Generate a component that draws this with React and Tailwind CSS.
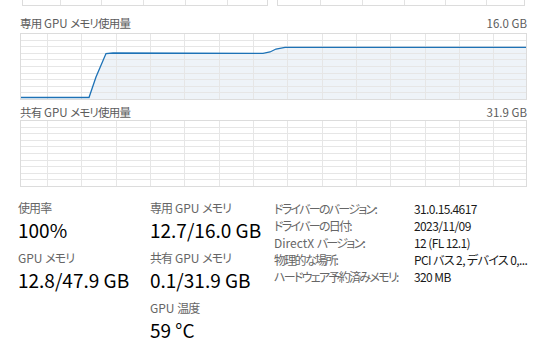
const MAIN_COLS = [27, 61.3, 95.7, 130, 164.3, 198.7, 233, 267.3, 301.7, 336, 370.3, 404.7, 439, 473.3];

function MiniGraph({ width, cols }) {
    return (
        <svg width={width} height={6} className="block">
            {cols.map((x) => (
                <line key={x} x1={x + 0.5} y1={0} x2={x + 0.5} y2={6} stroke="#e3e3e3" />
            ))}
            <line x1={0.5} y1={0} x2={0.5} y2={6} stroke="#dcdcdc" />
            <line x1={width - 0.5} y1={0} x2={width - 0.5} y2={6} stroke="#dcdcdc" />
            <line x1={0} y1={5.5} x2={width} y2={5.5} stroke="#dcdcdc" />
        </svg>
    );
}

function MemGraph({ fill, line }) {
    const w = 507;
    const h = 67;
    const rows = [1, 2, 3, 4, 5, 6, 7, 8, 9].map((k) => Math.round(k * 6.6) + 0.5);
    return (
        <svg width={w} height={h} className="block">
            {fill && <path d={fill} fill="#eef3f8" />}
            {rows.map((y) => (
                <line key={y} x1={0} y1={y} x2={w} y2={y} stroke="#e6e6e6" />
            ))}
            {MAIN_COLS.map((x) => (
                <line key={x} x1={Math.round(x) + 0.5} y1={0} x2={Math.round(x) + 0.5} y2={h} stroke="#e6e6e6" />
            ))}
            <rect x={0.5} y={0.5} width={w - 1} height={h - 1} fill="none" stroke="#dcdcdc" />
            {line && <path d={line} fill="none" stroke="#1d72b6" strokeWidth="1.3" />}
        </svg>
    );
}

const dedicatedLine =
    "M 1 64.5 L 69 64.5 L 76 44 L 86 20.5 L 93 20 L 243 20.3 L 250 19 L 256 16 L 265 14.3 L 506 14.3";
const dedicatedFill =
    "M 69 66 L 69 64.5 L 76 44 L 86 20.5 L 93 20 L 243 20.3 L 250 19 L 256 16 L 265 14.3 L 506 14.3 L 506 66 Z";

// latin words keep normal spacing, kana/kanji are squeezed
function L({ children }) {
    return <span className="tracking-normal whitespace-pre">{children}</span>;
}

function Stat({ label, value }) {
    return (
        <div className="mb-[6px]">
            <div className="text-[12px] leading-[17px] tracking-[-0.9px] text-[#666]">{label}</div>
            <div className="text-[19px] leading-[27px] text-black">{value}</div>
        </div>
    );
}

const details = [
    ["driver", <>ドライバーのバージョン:</>, "31.0.15.4617"],
    ["date", <>ドライバーの日付:</>, "2023/11/09"],
    ["dx", <><L>{"DirectX "}</L>バージョン:</>, "12 (FL 12.1)"],
    ["loc", <>物理的な場所:</>, "PCI バス 2, デバイス 0,..."],
    ["hw", <>ハードウェア予約済みメモリ:</>, "320 MB"],
];

export default function App() {
    return (
        <div className="w-[537px] h-[353px] bg-white overflow-hidden font-['Noto_Sans_CJK_JP',sans-serif] [font-feature-settings:'palt']">
            <div className="flex pl-[22px] gap-[9px]">
                <MiniGraph width={246} cols={[38, 79, 121, 163, 205]} />
                <MiniGraph width={248} cols={[43, 85, 127, 168, 209]} />
            </div>

            <div className="flex justify-between pl-[20px] pr-[10px] mt-[9px] text-[11.5px] leading-[16px] text-[#5c5c5c]">
                <span className="tracking-[-0.8px]">専用<L>{" GPU "}</L>メモリ使用量</span>
                <span>16.0 GB</span>
            </div>
            <div className="pl-[20px] mt-[2px]">
                <MemGraph fill={dedicatedFill} line={dedicatedLine} />
            </div>

            <div className="flex justify-between pl-[20px] pr-[10px] mt-[4px] text-[11.5px] leading-[16px] text-[#5c5c5c]">
                <span className="tracking-[-0.8px]">共有<L>{" GPU "}</L>メモリ使用量</span>
                <span>31.9 GB</span>
            </div>
            <div className="pl-[20px]">
                <MemGraph />
            </div>

            <div className="flex mt-[12px]">
                <div className="w-[150px] pl-[18px]">
                    <Stat label="使用率" value="100%" />
                    <Stat label={<><L>{"GPU "}</L>メモリ</>} value="12.8/47.9 GB" />
                </div>
                <div className="w-[124px]">
                    <Stat label={<>専用<L>{" GPU "}</L>メモリ</>} value="12.7/16.0 GB" />
                    <Stat label={<>共有<L>{" GPU "}</L>メモリ</>} value="0.1/31.9 GB" />
                    <Stat label={<><L>{"GPU "}</L>温度</>} value="59 °C" />
                </div>
                <div className="flex-1 min-w-0 pt-[1px] text-[12px] leading-[17px] whitespace-nowrap">
                    {details.map(([id, k, v]) => (
                        <div key={id} className="flex">
                            <div className="w-[140px] tracking-[-1.7px] text-[#666]">{k}</div>
                            <div className="flex-1 min-w-0 tracking-[-0.6px] text-[#1a1a1a]">{v}</div>
                        </div>
                    ))}
                </div>
            </div>
        </div>
    );
}
